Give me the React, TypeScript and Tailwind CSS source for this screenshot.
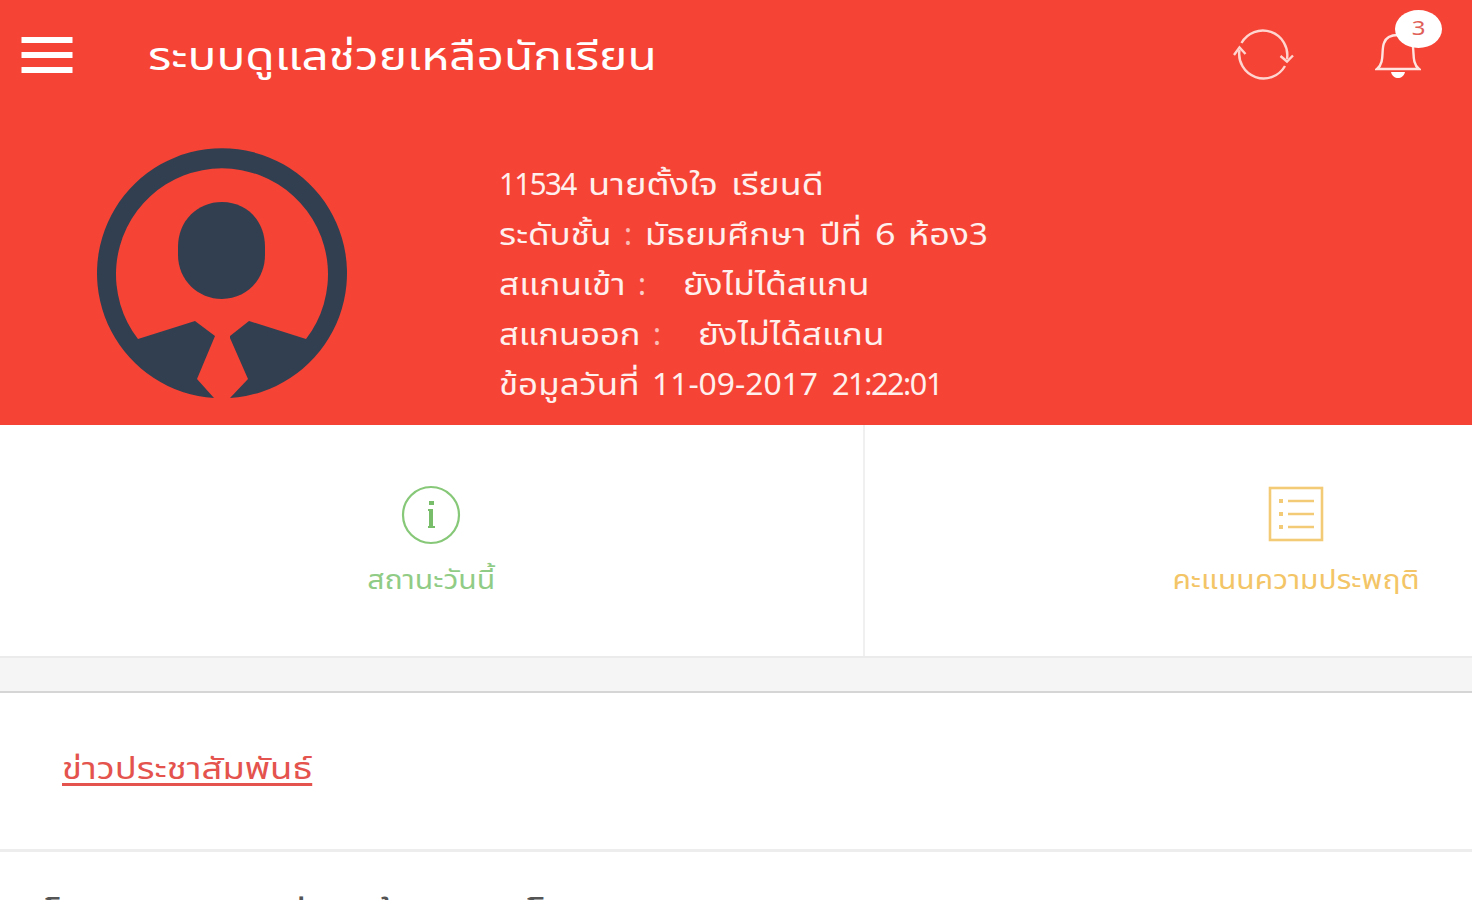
import React from "react";

const font = "font-['Noto_Sans_Thai','Noto_Sans','Open_Sans',sans-serif]";

const studentInfo = [
  [
    { text: "11534", style: "w-[89px] scale-x-[0.98] tracking-[-1.5px]" },
    { text: "นายตั้งใจ", style: "w-[143px] scale-x-[1.21]" },
    { text: "เรียนดี", style: "scale-x-[1.19]" },
  ],
  [
    { text: "ระดับชั้น", style: "w-[125px] scale-x-[1.17]" },
    { text: ":", style: "w-[21px] opacity-70" },
    { text: "มัธยมศึกษา", style: "w-[175px] scale-x-[1.16]" },
    { text: "ปีที่", style: "w-[55px] scale-x-[1.15]" },
    { text: "6", style: "w-[33px] scale-x-[1.2]" },
    { text: "ห้อง", style: "w-[61px] scale-x-[1.2]" },
    { text: "3", style: "scale-x-[1.1]" },
  ],
  [
    { text: "สแกนเข้า", style: "w-[139px] scale-x-[1.175]" },
    { text: ":", style: "w-[45px] opacity-80" },
    { text: "ยังไม่ได้สแกน", style: "scale-x-[1.17]" },
  ],
  [
    { text: "สแกนออก", style: "w-[154px] scale-x-[1.15]" },
    { text: ":", style: "w-[45px] opacity-70" },
    { text: "ยังไม่ได้สแกน", style: "scale-x-[1.17]" },
  ],
  [
    { text: "ข้อมูลวันที่", style: "w-[153px] scale-x-[1.165]" },
    { text: "11-09-2017", style: "w-[180px] scale-x-[1.06]" },
    { text: "21:22:01", style: "scale-x-[1.02] tracking-[-1.4px]" },
  ],
];

const MenuIcon = () => (
  <svg width="52" height="38" viewBox="0 0 52 38" fill="#fff">
    <rect x="0.5" y="1" width="51" height="6" />
    <rect x="0.5" y="16" width="51" height="6" />
    <rect x="0.5" y="31" width="51" height="6" />
  </svg>
);

const RefreshIcon = () => (
  <svg width="62" height="54" viewBox="0 0 62 54" fill="none" stroke="#ffd5cf" strokeWidth="2.4">
    <path d="M8.500 16A24.500 24.500 0 0 1 54 32" />
    <path d="M52 39A24.500 24.500 0 0 1 6.500 23" />
    <path d="M1 28L6.500 20.500L12.500 27" />
    <path d="M47.500 29L54 34.500L60 28.500" />
  </svg>
);

const BellIcon = () => (
  <svg width="46" height="48" viewBox="0 0 46 48" fill="none" stroke="#ffe4e0" strokeWidth="2.4">
    <path d="M2 39C10 33 6 20 9 13C11 7 16 5 23 5C30 5 35 7 37 13C40 20 36 33 44 39Z" />
    <path d="M16 42H30C29 46 26 48 23 48C20 48 17 46 16 42Z" fill="#fff" stroke="none" />
  </svg>
);

const Avatar = () => (
  <svg width="250" height="250" viewBox="0 0 250 250" fill="#323f50">
    <path d="M117 250A125 125 0 1 1 133 250L151 231L133 190V188L152 173L209 191A106 106 0 1 0 41 191L98 173L118 188L100 231Z" />
    <path d="M125 54C150 54 168 73 168 99V107C168 132 149 151 125 151C101 151 81 132 81 107V99C81 73 100 54 125 54Z" />
  </svg>
);

const InfoIcon = () => (
  <svg width="60" height="60" viewBox="0 0 60 60" fill="none" stroke="#86c878">
    <circle cx="30" cy="30" r="28" strokeWidth="2.2" />
    <path d="M27 24H32V41H34V43H27V41H28V26H27Z" fill="#78bd69" stroke="none" />
    <rect x="28" y="16" width="5" height="4" fill="#78bd69" stroke="none" />
  </svg>
);

const ListIcon = () => (
  <svg width="56" height="56" viewBox="0 0 56 56" fill="none" stroke="#f3cb77">
    <rect x="2" y="2" width="52" height="52" strokeWidth="2.6" />
    <path d="M20 15H46M20 28H46M20 41H46" strokeWidth="2.6" />
    <path d="M11 15H15M11 28H15M11 41H15" strokeWidth="4" />
  </svg>
);

const Header = () => (
  <header className="h-[425px] bg-[#f54336] text-[#fff0ed]">
    <div className="flex h-[110px] items-center pl-[21px] pr-[51px]">
      <MenuIcon />
      <h1 className="ml-[75px] origin-left scale-x-[1.196] pt-[5px] text-[40px] leading-[50px] whitespace-nowrap text-white">
        ระบบดูแลช่วยเหลือนักเรียน
      </h1>
      <div className="mb-[2px] ml-auto flex items-center gap-[80px]">
        <RefreshIcon />
        <div className="relative">
          <BellIcon />
          <span className="absolute -top-[20px] left-[20px] flex h-[38px] w-[47px] items-center justify-center rounded-[50%] bg-white text-[20px] text-[#e06058]">
            <span className="scale-x-[1.2]">3</span>
          </span>
        </div>
      </div>
    </div>
    <div className="flex pl-[97px] pt-[38px]">
      <Avatar />
      <ul className="ml-[152px] pt-[13px] text-[30px] leading-[50px] whitespace-nowrap">
        {studentInfo.map((line, i) => (
          <li key={i} className="flex">
            {line.map((word) => (
              <span key={word.text} className={`shrink-0 origin-left ${word.style}`}>
                {word.text}
              </span>
            ))}
          </li>
        ))}
      </ul>
    </div>
  </header>
);

const App = () => {
  return (
    <div className={`h-[900px] w-[1472px] overflow-hidden bg-white ${font}`}>
      <Header />
      <nav className="flex h-[233px] overflow-hidden border-b-2 border-[#ebebeb]">
        <a className="flex w-[865px] shrink-0 flex-col items-center border-r-2 border-[#f0f0f0] pt-[60px] pr-[1px] text-[#91cc86]">
          <InfoIcon />
          <span className="mt-[13px] scale-x-[1.16] text-[26px] leading-[46px]">สถานะวันนี้</span>
        </a>
        <a className="flex w-[861px] shrink-0 flex-col items-center pt-[61px] text-[#f3c566]">
          <ListIcon />
          <span className="mt-[16px] scale-x-[1.155] text-[26px] leading-[46px]">
            คะแนนความประพฤติ
          </span>
        </a>
      </nav>
      <div className="h-[35px] border-b-2 border-[#d5d5d5] bg-[#f5f5f5]" />
      <section className="h-[159px] border-b-3 border-[#ededed] pl-[62px] pt-[52px]">
        <a className="inline-block origin-left scale-x-[1.214] text-[30px] leading-[50px] text-[#e4534d] underline underline-offset-[4px]">
          ข่าวประชาสัมพันธ์
        </a>
      </section>
      <p className="flex pt-[39px] pl-[45px] text-[36px] leading-[50px] whitespace-nowrap text-[#555]">
        <span className="w-[482px] origin-left scale-x-[1.15]">โครงการอบรมค่ายกล้าแสดง</span>
        <span className="origin-left scale-x-[1.3]">โดย</span>
      </p>
    </div>
  );
};

export default App;
